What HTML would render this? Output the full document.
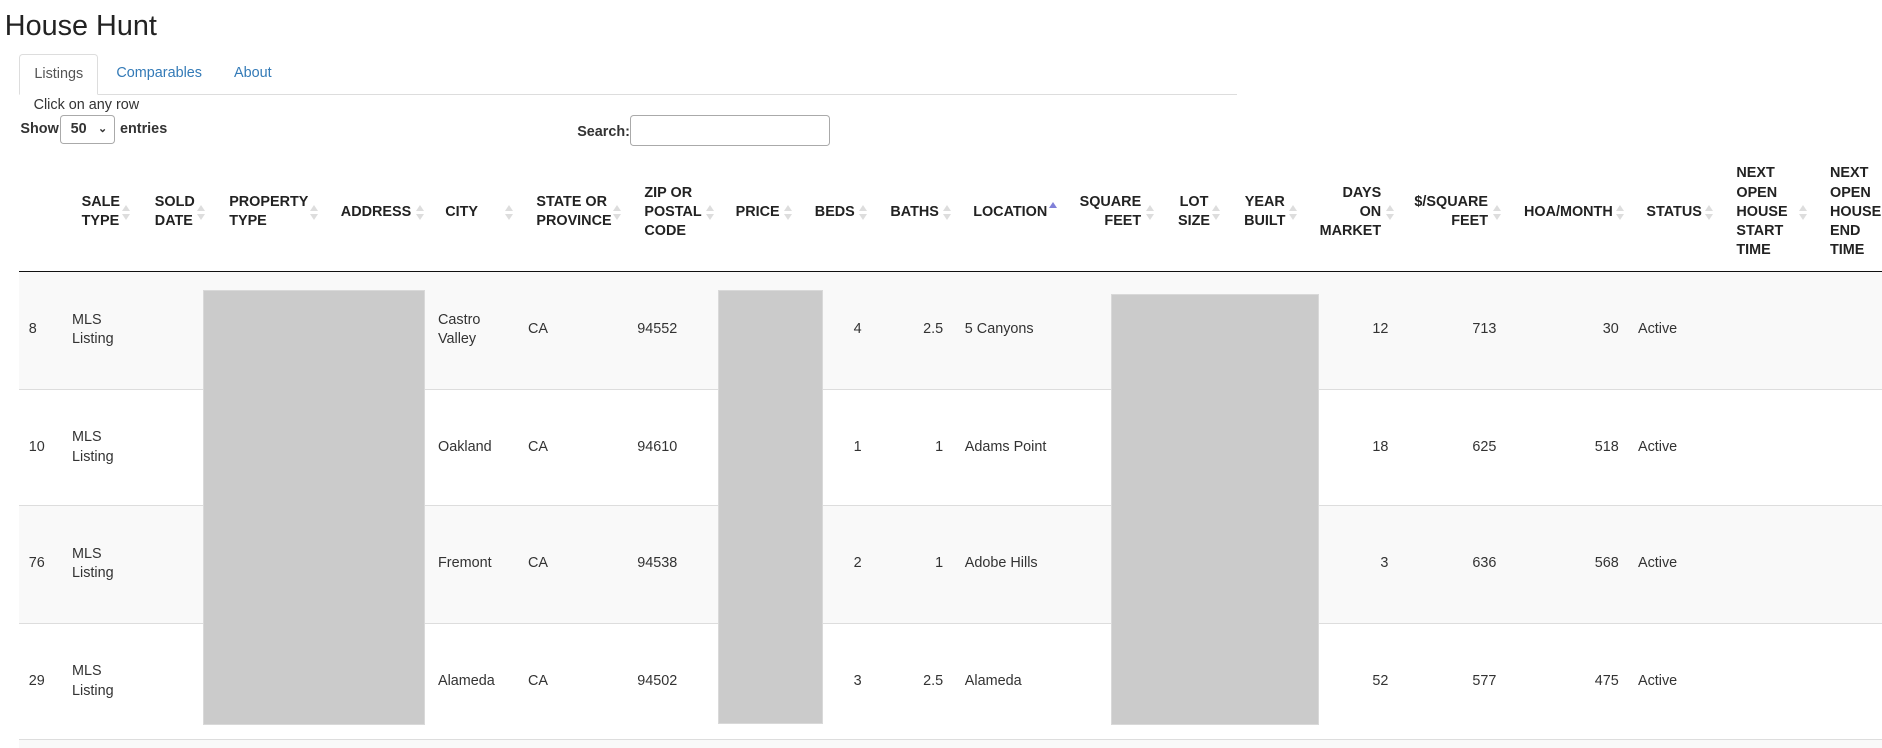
<!DOCTYPE html>
<html><head><meta charset="utf-8">
<style>
html,body{margin:0;padding:0;background:#fff;overflow:hidden}
#w{zoom:1.2;width:1568px;height:623px;position:relative;font-family:"Liberation Sans",Arial,sans-serif;color:#333;font-size:12px;overflow:hidden}
.a{position:absolute}
h1{position:absolute;left:4px;top:7px;margin:0;font-size:24px;font-weight:normal;color:#222;line-height:30px}
.tabline{position:absolute;left:16px;top:78px;width:1015px;height:1px;background:#ddd}
.tab{position:absolute;top:45px;height:34px;line-height:32px;font-size:12px;color:#337ab7}
.tab.act{color:#555;border:1px solid #ddd;border-bottom:1px solid #fff;border-radius:3px 3px 0 0;background:#fff;box-sizing:border-box}
.th{position:absolute;top:131px;height:92px;display:flex;align-items:center;font-weight:bold;font-size:12px;line-height:16px;color:#222}
.th.r{text-align:right;justify-content:flex-end}
.s{position:absolute;top:170px;width:7px;height:14px}
.s:before,.s:after{content:"";position:absolute;left:0;border-left:3.5px solid transparent;border-right:3.5px solid transparent}
.s:before{top:1px;border-bottom:5px solid #ddd}
.s:after{top:8px;border-top:5px solid #ddd}
.su:before{border-bottom-color:#8080d8}
.su:after{display:none}
.row{position:absolute;left:16px;width:1552px;border-bottom:1px solid #ddd}
.d{position:absolute;line-height:16px;font-size:12px;color:#333}
.d.r{text-align:right}
.g{position:absolute;background:#cbcbcb;border:1px solid #d9d9d9;box-sizing:border-box}
</style></head><body><div id="w">
<h1>House Hunt</h1>
<div class="tabline"></div>
<div class="tab act" style="left:16px;width:66px;text-align:center">Listings</div>
<div class="tab" style="left:97px">Comparables</div>
<div class="tab" style="left:195px">About</div>
<div class="a" style="left:28px;top:81px;line-height:14px">Click on any row</div>
<div class="a" style="left:17px;top:101px;font-weight:bold">Show</div>
<div class="a" style="left:50px;top:96px;width:46px;height:24px;border:1px solid #aaa;border-radius:3px;box-sizing:border-box;font-weight:bold;line-height:22px;padding-left:8px">50<span style="position:absolute;right:6px;top:0;font-size:9px">&#8964;</span></div>
<div class="a" style="left:100px;top:101px;font-weight:bold">entries</div>
<div class="a" style="left:481px;top:103px;font-weight:bold">Search:</div>
<div class="a" style="left:525px;top:96px;width:167px;height:26px;border:1px solid #aaa;border-radius:3px;box-sizing:border-box"></div>

<div class="th" style="left:68px">SALE<br>TYPE</div><div class="s" style="left:102px"></div>
<div class="th" style="left:129px">SOLD<br>DATE</div><div class="s" style="left:164px"></div>
<div class="th" style="left:191px">PROPERTY<br>TYPE</div><div class="s" style="left:258px"></div>
<div class="th" style="left:284px">ADDRESS</div><div class="s" style="left:347px"></div>
<div class="th" style="left:371px">CITY</div><div class="s" style="left:421px"></div>
<div class="th" style="left:447px">STATE OR<br>PROVINCE</div><div class="s" style="left:511px"></div>
<div class="th" style="left:537px">ZIP OR<br>POSTAL<br>CODE</div><div class="s" style="left:588px"></div>
<div class="th" style="left:613px">PRICE</div><div class="s" style="left:653px"></div>
<div class="th" style="left:679px">BEDS</div><div class="s" style="left:716px"></div>
<div class="th" style="left:742px">BATHS</div><div class="s" style="left:786px"></div>
<div class="th" style="left:811px">LOCATION</div><div class="s su" style="left:874px;top:167px"></div>
<div class="th r" style="left:880px;width:71px">SQUARE<br>FEET</div><div class="s" style="left:955px"></div>
<div class="th" style="left:983px;width:24px;justify-content:center;text-align:center">LOT<br>SIZE</div><div class="s" style="left:1010px"></div>
<div class="th" style="left:1037px;width:34px;justify-content:center;text-align:center">YEAR<br>BUILT</div><div class="s" style="left:1074px"></div>
<div class="th r" style="left:1080px;width:71px">DAYS<br>ON<br>MARKET</div><div class="s" style="left:1155px"></div>
<div class="th r" style="left:1170px;width:70px">$/SQUARE<br>FEET</div><div class="s" style="left:1244px"></div>
<div class="th" style="left:1270px">HOA/MONTH</div><div class="s" style="left:1347px"></div>
<div class="th" style="left:1372px">STATUS</div><div class="s" style="left:1421px"></div>
<div class="th" style="left:1447px">NEXT<br>OPEN<br>HOUSE<br>START<br>TIME</div><div class="s" style="left:1499px"></div>
<div class="th" style="left:1525px">NEXT<br>OPEN<br>HOUSE<br>END<br>TIME</div>
<div class="a" style="left:16px;top:226px;width:1552px;height:1px;background:#111"></div>

<div class="row" style="top:227px;height:97px;background:#f9f9f9"></div>
<div class="row" style="top:325px;height:96px;background:#fff"></div>
<div class="row" style="top:422px;height:97px;background:#f9f9f9"></div>
<div class="row" style="top:520px;height:96px;background:#fff"></div>
<div class="a" style="left:16px;top:617px;width:1552px;height:10px;background:#f9f9f9"></div>

<div class="g" style="left:169px;top:242px;width:185px;height:362px"></div>
<div class="g" style="left:598px;top:242px;width:88px;height:361px"></div>
<div class="g" style="left:926px;top:245px;width:173px;height:359px"></div>

<div class="d" style="left:24px;top:267px">8</div>
<div class="d" style="left:60px;top:259px">MLS<br>Listing</div>
<div class="d" style="left:365px;top:259px">Castro<br>Valley</div>
<div class="d" style="left:440px;top:267px">CA</div>
<div class="d" style="left:531px;top:267px">94552</div>
<div class="d r" style="left:680px;width:38px;top:267px">4</div>
<div class="d r" style="left:740px;width:46px;top:267px">2.5</div>
<div class="d" style="left:804px;top:267px">5 Canyons</div>
<div class="d r" style="left:1100px;width:57px;top:267px">12</div>
<div class="d r" style="left:1190px;width:57px;top:267px">713</div>
<div class="d r" style="left:1290px;width:59px;top:267px">30</div>
<div class="d" style="left:1365px;top:267px">Active</div>

<div class="d" style="left:24px;top:365px">10</div>
<div class="d" style="left:60px;top:357px">MLS<br>Listing</div>
<div class="d" style="left:365px;top:365px">Oakland</div>
<div class="d" style="left:440px;top:365px">CA</div>
<div class="d" style="left:531px;top:365px">94610</div>
<div class="d r" style="left:680px;width:38px;top:365px">1</div>
<div class="d r" style="left:740px;width:46px;top:365px">1</div>
<div class="d" style="left:804px;top:365px">Adams Point</div>
<div class="d r" style="left:1100px;width:57px;top:365px">18</div>
<div class="d r" style="left:1190px;width:57px;top:365px">625</div>
<div class="d r" style="left:1290px;width:59px;top:365px">518</div>
<div class="d" style="left:1365px;top:365px">Active</div>

<div class="d" style="left:24px;top:462px">76</div>
<div class="d" style="left:60px;top:454px">MLS<br>Listing</div>
<div class="d" style="left:365px;top:462px">Fremont</div>
<div class="d" style="left:440px;top:462px">CA</div>
<div class="d" style="left:531px;top:462px">94538</div>
<div class="d r" style="left:680px;width:38px;top:462px">2</div>
<div class="d r" style="left:740px;width:46px;top:462px">1</div>
<div class="d" style="left:804px;top:462px">Adobe Hills</div>
<div class="d r" style="left:1100px;width:57px;top:462px">3</div>
<div class="d r" style="left:1190px;width:57px;top:462px">636</div>
<div class="d r" style="left:1290px;width:59px;top:462px">568</div>
<div class="d" style="left:1365px;top:462px">Active</div>

<div class="d" style="left:24px;top:560px">29</div>
<div class="d" style="left:60px;top:552px">MLS<br>Listing</div>
<div class="d" style="left:365px;top:560px">Alameda</div>
<div class="d" style="left:440px;top:560px">CA</div>
<div class="d" style="left:531px;top:560px">94502</div>
<div class="d r" style="left:680px;width:38px;top:560px">3</div>
<div class="d r" style="left:740px;width:46px;top:560px">2.5</div>
<div class="d" style="left:804px;top:560px">Alameda</div>
<div class="d r" style="left:1100px;width:57px;top:560px">52</div>
<div class="d r" style="left:1190px;width:57px;top:560px">577</div>
<div class="d r" style="left:1290px;width:59px;top:560px">475</div>
<div class="d" style="left:1365px;top:560px">Active</div>
</div></body></html>
